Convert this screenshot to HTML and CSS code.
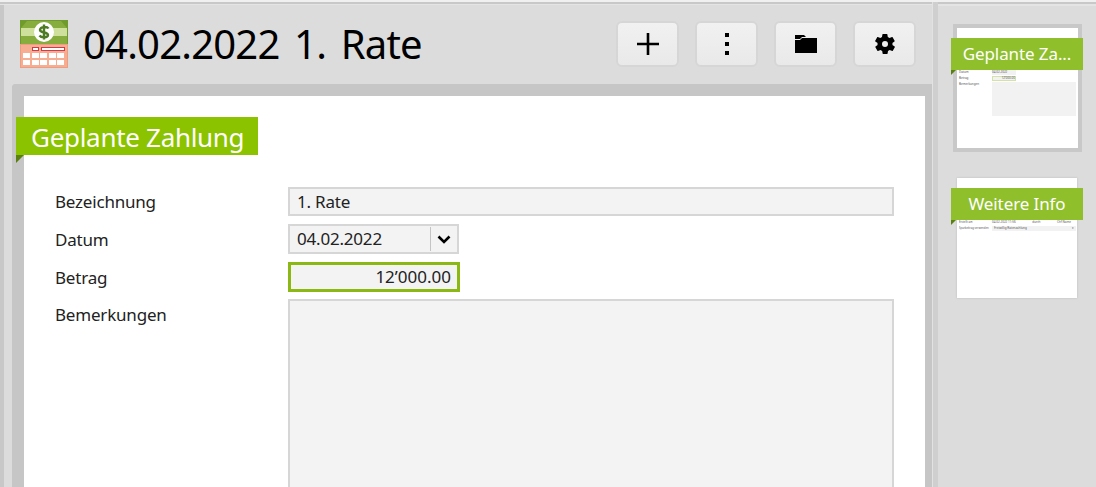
FILE: index.html
```html
<!DOCTYPE html>
<html lang="de">
<head>
    <meta charset="UTF-8">
    <title>04.02.2022 1. Rate</title>
    <link rel="stylesheet" href="styles.css">
</head>
<body>
    <div class="app">
        <div class="main">
            <header class="topbar">
                <svg class="app-icon" width="48" height="48" viewBox="0 0 48 48">
                    <rect width="48" height="24" fill="#6f9a2c"/>
                    <path d="M1 24V8l6-7h34l6 7v16z" fill="#86ad3e"/>
                    <rect x="1" y="8" width="46" height="8" fill="#cfe09d"/>
                    <circle cx="24" cy="12" r="10" fill="#fff"/>
                    <path d="M28.500 8.500c-1-1.800-8-2.400-8.500 1.200-.5 3.800 8 1.800 8 5.300 0 3-7 2.800-8.500.5M24 4.500v15" fill="none" stroke="#4d7a23" stroke-width="2.400"/>
                    <rect y="24" width="48" height="24" fill="#ef9d80"/>
                    <rect x="1" y="25" width="46" height="22" fill="#f6ad92"/>
                    <rect x="12.500" y="27.500" width="6" height="3" fill="#fff" stroke="#d2394a"/>
                    <rect x="21.500" y="27.500" width="23" height="3" fill="#fff" stroke="#d2394a"/>
                    <g fill="#fff">
                        <rect x="3" y="33" width="7" height="5"/><rect x="12" y="33" width="7" height="5"/><rect x="20" y="33" width="7" height="5"/><rect x="29" y="33" width="7" height="5"/><rect x="37" y="33" width="7" height="5"/>
                        <rect x="3" y="40" width="7" height="5"/><rect x="12" y="40" width="7" height="5"/><rect x="20" y="40" width="7" height="5"/><rect x="29" y="40" width="7" height="5"/><rect x="37" y="40" width="7" height="5"/>
                    </g>
                </svg>
                <h1 class="title">04.02.2022 1. Rate</h1>
                <div class="toolbar">
                    <button class="tool-btn">
                        <svg width="22" height="22" viewBox="0 0 22 22"><path d="M0 11h22M11 0v22" stroke="#000" stroke-width="2.600"/></svg>
                    </button>
                    <button class="tool-btn">
                        <svg width="4" height="22" viewBox="0 0 4 22" fill="#000"><rect width="4" height="4"/><rect y="9" width="4" height="4"/><rect y="18" width="4" height="4"/></svg>
                    </button>
                    <button class="tool-btn">
                        <svg width="22" height="18" viewBox="0 0 22 18" fill="#000"><path d="M0 0h9l2 2H7L5 4H0zM0 5h5l2-2h15v15H0z"/></svg>
                    </button>
                    <button class="tool-btn">
                        <svg width="24" height="24" viewBox="0 0 24 24" fill="#000"><path fill-rule="evenodd" d="M19.4 13c.1-.3.100-.7.100-1s0-.7-.1-1l2.100-1.600c.2-.2.200-.4.100-.6l-2-3.500c-.1-.2-.4-.3-.6-.2l-2.500 1c-.5-.4-1.100-.7-1.700-1l-.4-2.600c0-.3-.2-.5-.5-.5h-4c-.3 0-.5.200-.5.500l-.4 2.600c-.6.300-1.200.6-1.700 1l-2.500-1c-.2-.1-.5 0-.6.200l-2 3.500c-.1.200-.1.400.1.600L4.600 11c-.1.300-.1.700-.1 1s0 .7.100 1l-2.100 1.600c-.2.200-.2.400-.1.600l2 3.500c.1.200.4.300.6.200l2.500-1c.5.400 1.100.7 1.700 1l.4 2.600c0 .3.200.5.500.5h4c.3 0 .5-.2.500-.5l.4-2.600c.6-.3 1.200-.6 1.700-1l2.500 1c.2.100.5 0 .6-.2l2-3.500c.1-.2.100-.4-.1-.6zM12 15a3 3 0 1 1 0-6 3 3 0 0 1 0 6z"/></svg>
                    </button>
                </div>
            </header>
            <section class="panel">
                <div class="sheet">
                    <h2 class="ribbon">Geplante Zahlung</h2>
                    <form class="form">
                        <label class="form-label form-label-first">Bezeichnung</label>
                        <div class="field field-wide">1. Rate</div>
                        <label class="form-label">Datum</label>
                        <div class="field field-date">
                            <span class="date-value">04.02.2022</span>
                            <span class="date-drop">
                                <svg width="14" height="9" viewBox="0 0 14 9"><path d="M1.500 1.500 7 7l5.500-5.500" fill="none" stroke="#000" stroke-width="2.600"/></svg>
                            </span>
                        </div>
                        <label class="form-label">Betrag</label>
                        <div class="field field-amount">12’000.00</div>
                        <label class="form-label">Bemerkungen</label>
                        <div class="field field-notes"></div>
                    </form>
                </div>
            </section>
        </div>
        <aside class="sidebar">
            <div class="thumb thumb-active">
                <div class="thumb-ribbon">Geplante Za...</div>
                <div class="mini-form">
                    <span class="mini-label">Datum</span>
                    <span class="mini-field mini-short">04.02.2022</span>
                    <span class="mini-label">Betrag</span>
                    <span class="mini-field mini-short mini-focus">12’000.00</span>
                    <span class="mini-label">Bemerkungen</span>
                    <span class="mini-field mini-notes"></span>
                </div>
            </div>
            <div class="thumb">
                <div class="thumb-ribbon">Weitere Info</div>
                <div class="mini-form mini-form-info">
                    <span class="mini-label">Erstellt am</span>
                    <span class="mini-value"><span>04.02.2022 11:56</span><span>durch</span><span>Chf Name</span></span>
                    <span class="mini-label">Sparbeitrag verwenden</span>
                    <span class="mini-field mini-wide"><span>Freiwillig Ratenzahlung</span><span>▾</span></span>
                </div>
            </div>
        </aside>
    </div>
</body>
</html>
```

FILE: styles.css
```css
html, body {
    margin: 0;
    padding: 0;
    height: 487px;
    overflow: hidden;
}
body {
    font-family: "Noto Sans", Arial, sans-serif;
    background-color: #dcdcdc;
    color: #222;
}
.app {
    display: flex;
    height: 482px;
    border-top: 2px solid #f0f0f0;
    box-shadow: inset 0 2px 0 #c8c8c8, inset 0 4px 0 #e4e4e4;
    padding-top: 3px;
}
.main {
    width: 920px;
    padding-left: 12px;
    display: flex;
    flex-direction: column;
    margin-top: -3px;
    background: linear-gradient(to right, #c8c8c8 4px, #dcdcdc 4px);
    background-position: 0 3px;
    background-repeat: no-repeat;
}
.topbar {
    height: 82px;
    flex-shrink: 0;
    display: flex;
    align-items: flex-start;
    margin-left: -12px;
    padding-left: 20px;
    box-sizing: border-box;
}
.app-icon {
    margin-top: 18px;
    flex-shrink: 0;
}
.title {
    margin: 13px 0 0 15px;
    font-size: 40px;
    font-weight: 400;
    color: #000;
    letter-spacing: -0.8px;
    word-spacing: 5px;
    line-height: 58px;
}
.toolbar {
    display: flex;
    gap: 16px;
    margin-left: auto;
    margin-right: 16px;
    margin-top: 19px;
}
.tool-btn {
    width: 63px;
    height: 46px;
    padding: 0;
    display: flex;
    align-items: center;
    justify-content: center;
    background: linear-gradient(#f1f1f1, #e9e9e9);
    border: 2px solid #d6d6d6;
    border-radius: 6px;
}
.panel {
    flex: 1;
    min-height: 0;
    border-style: solid;
    border-color: #c6c6c6;
    border-width: 12px 7px 0 12px;
    border-radius: 4px 0 0 0;
    background-color: #fff;
}
.sheet {
    height: 100%;
    display: flex;
    flex-direction: column;
}
.ribbon {
    position: relative;
    align-self: flex-start;
    width: 242px;
    height: 38px;
    box-sizing: border-box;
    margin: 21px 0 0 -8px;
    padding-left: 15px;
    background-color: #8cc300;
    color: #fff;
    font-size: 26px;
    font-weight: 400;
    line-height: 40px;
    letter-spacing: -0.3px;
}
.ribbon::after {
    content: "";
    position: absolute;
    left: 0;
    top: 100%;
    border-style: solid;
    border-width: 8px 8px 0 0;
    border-color: #5b7f10 transparent transparent transparent;
}
.form {
    margin: 32px 0 0 31px;
    display: grid;
    grid-template-columns: 233px 606px;
    grid-template-rows: 29px 30px 29px 200px;
    row-gap: 8px;
    align-items: start;
    font-size: 17px;
}
.form-label {
    line-height: 32px;
    letter-spacing: -0.2px;
}
.form-label-first {
    line-height: 30px;
}
.field {
    box-sizing: border-box;
    background-color: #f3f3f3;
    border: 2px solid #d6d6d6;
    letter-spacing: -0.2px;
}
.field-wide {
    height: 29px;
    line-height: 25px;
    padding-left: 7px;
}
.field-date {
    width: 171px;
    height: 30px;
    display: flex;
    line-height: 26px;
}
.date-value {
    flex: 1;
    padding-left: 7px;
}
.date-drop {
    width: 26px;
    height: 24px;
    margin-top: 1px;
    border-left: 1px solid #c4c4c4;
    display: flex;
    align-items: center;
    justify-content: center;
}
.field-amount {
    width: 172px;
    height: 30px;
    border: 3px solid #8cb814;
    line-height: 24px;
    text-align: right;
    padding-right: 6px;
    letter-spacing: 0;
}
.field-notes {
    height: 200px;
}
.sidebar {
    flex: 1;
    margin-top: -3px;
    border-left: 1px solid #e2e2e2;
    box-shadow: inset 5px 0 0 #cfcfcf;
    padding-top: 22px;
    box-sizing: border-box;
    height: 485px;
    display: flex;
    flex-direction: column;
    gap: 26px;
}
.thumb {
    width: 120px;
    height: 120px;
    margin-left: 24px;
    background-color: #fff;
    display: flex;
    flex-direction: column;
    font-size: 3px;
    color: #555;
    box-shadow: 0 0 2px #bbb;
}
.thumb-active {
    width: 121px;
    margin-left: 20px;
    border: 4px solid #c8c8c8;
    box-shadow: none;
}
.thumb-ribbon {
    position: relative;
    width: 132px;
    height: 32px;
    flex-shrink: 0;
    margin: 10px 0 0 -6px;
    background-color: #90bf2c;
    color: #fff;
    font-size: 17px;
    line-height: 32px;
    text-align: center;
    letter-spacing: -0.1px;
}
.thumb-ribbon::after {
    content: "";
    position: absolute;
    left: 0;
    top: 100%;
    border-style: solid;
    border-width: 5px 5px 0 0;
    border-color: #5b7f10 transparent transparent transparent;
}
.mini-form {
    display: grid;
    grid-template-columns: 33px 84px;
    grid-auto-rows: min-content;
    row-gap: 1px;
    margin: 0 0 0 2px;
    line-height: 5px;
    white-space: nowrap;
}
.mini-field {
    display: block;
    height: 5px;
    background-color: #f2f2f2;
    box-sizing: border-box;
}
.mini-short {
    width: 24px;
}
.mini-focus {
    border: 1px solid #d3e2a6;
    text-align: right;
    line-height: 3px;
}
.mini-notes {
    height: 34px;
}
.mini-value {
    display: flex;
    justify-content: space-between;
    padding-right: 5px;
}
.mini-wide {
    display: flex;
    justify-content: space-between;
    padding: 0 2px;
}
.mini-form-info .mini-label {
    font-size: 2.700px;
    overflow: hidden;
}
```
